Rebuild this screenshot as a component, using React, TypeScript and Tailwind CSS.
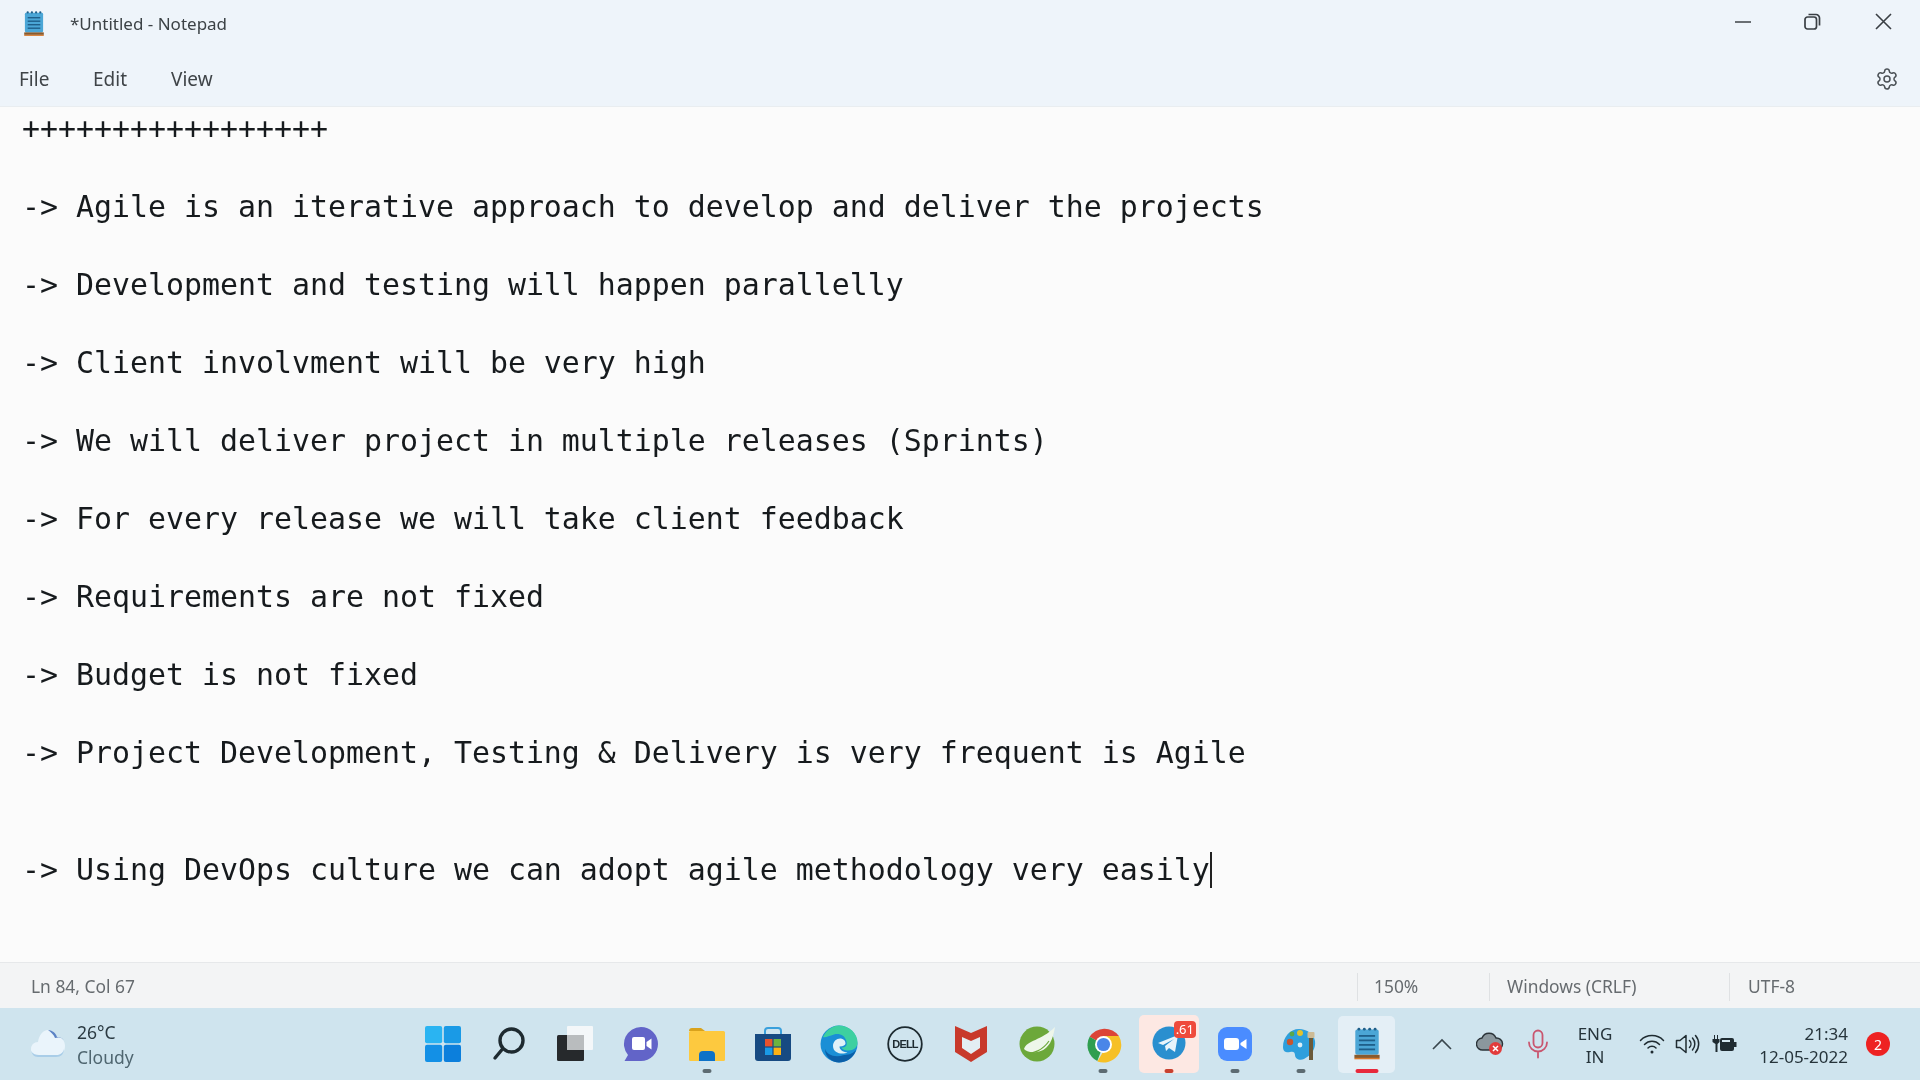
import { Settings } from "lucide-react";

const lines = [
  "+++++++++++++++++",
  "",
  "-> Agile is an iterative approach to develop and deliver the projects",
  "",
  "-> Development and testing will happen parallelly",
  "",
  "-> Client involvment will be very high",
  "",
  "-> We will deliver project in multiple releases (Sprints)",
  "",
  "-> For every release we will take client feedback",
  "",
  "-> Requirements are not fixed",
  "",
  "-> Budget is not fixed",
  "",
  "-> Project Development, Testing & Delivery is very frequent is Agile",
  "",
  "",
];

function NotepadIcon({ size }: { size: number }) {
  return (
    <svg width={size} height={size} viewBox="0 0 40 40">
      <rect x="7" y="4" width="26" height="28" rx="2" fill="#4ba6d6" />
      <g fill="#1f5f8a">
        <circle cx="11" cy="3.5" r="1.6" />
        <circle cx="17" cy="3.5" r="1.6" />
        <circle cx="23" cy="3.5" r="1.6" />
        <circle cx="29" cy="3.5" r="1.6" />
        <rect x="11" y="10" width="18" height="2" />
        <rect x="11" y="15" width="18" height="2" />
        <rect x="11" y="20" width="18" height="2" />
        <rect x="11" y="25" width="18" height="2" />
      </g>
      <rect x="6" y="32" width="28" height="3.5" fill="#8a5a2c" />
      <rect x="6" y="35.5" width="28" height="1.5" fill="#d9792b" />
    </svg>
  );
}

function StartIcon() {
  return (
    <svg width="36" height="36" viewBox="0 0 36 36">
      <rect x="0" y="0" width="17.2" height="17.2" rx="2" fill="#2ab4f2" />
      <rect x="18.8" y="0" width="17.2" height="17.2" rx="2" fill="#1a9ae6" />
      <rect x="0" y="18.8" width="17.2" height="17.2" rx="2" fill="#1390e6" />
      <rect x="18.8" y="18.8" width="17.2" height="17.2" rx="2" fill="#0c7fdc" />
    </svg>
  );
}

function SearchIcon() {
  return (
    <svg width="34" height="36" viewBox="0 0 34 36" fill="none" stroke="#1e2a30" strokeWidth="3.4" strokeLinecap="round">
      <circle cx="19.5" cy="14.5" r="11.5" />
      <path d="M10.5 23 L3 32" />
    </svg>
  );
}

function TaskViewIcon() {
  return (
    <svg width="36" height="36" viewBox="0 0 36 36">
      <rect x="10" y="0" width="26" height="24" rx="1" fill="#f4f7f9" />
      <rect x="0" y="9" width="27" height="26" rx="1.5" fill="#26292c" />
      <rect x="10" y="9" width="17" height="15" fill="#b9bcbe" />
    </svg>
  );
}

function ChatIcon() {
  return (
    <svg width="36" height="36" viewBox="0 0 36 36">
      <path d="M18 1a17 17 0 0 1 0 34H1.5l3.5-6A17 17 0 0 1 18 1z" fill="#6264c8" />
      <rect x="9" y="11" width="13" height="13" rx="2" fill="#fff" />
      <path d="M23.5 16l5-3.5v11l-5-3.5z" fill="#fff" />
    </svg>
  );
}

function ExplorerIcon() {
  return (
    <svg width="38" height="36" viewBox="0 0 38 36">
      <path d="M1 5a3 3 0 0 1 3-3h9l4 3h-16z" fill="#d9a21c" />
      <rect x="1" y="5" width="36" height="30" rx="1.5" fill="#fdc93f" />
      <path d="M11 35v-6a4 4 0 0 1 4-4h8a4 4 0 0 1 4 4v6z" fill="#0d72c8" />
    </svg>
  );
}

function StoreIcon() {
  return (
    <svg width="36" height="36" viewBox="0 0 36 36">
      <path d="M10 8V5a3 3 0 0 1 3-3h10a3 3 0 0 1 3 3v3" fill="none" stroke="#3aa0dc" strokeWidth="2" />
      <path d="M0 8h36v24a3 3 0 0 1-3 3H3a3 3 0 0 1-3-3z" fill="#174a82" />
      <rect x="10" y="13" width="7.4" height="7.4" fill="#e9522c" />
      <rect x="18.6" y="13" width="7.4" height="7.4" fill="#6cb33f" />
      <rect x="10" y="21.6" width="7.4" height="7.4" fill="#1a9ae6" />
      <rect x="18.6" y="21.6" width="7.4" height="7.4" fill="#fbb115" />
    </svg>
  );
}

function EdgeIcon() {
  return (
    <svg width="38" height="38" viewBox="0 0 38 38">
      <circle cx="19" cy="19" r="18.5" fill="#1a8fd6" />
      <path d="M3 12C7 3 15 .5 19 .5c11 0 18.5 8.5 18.5 17 0 5-4 8-9 8-4 0-7-1.500-7-3 4 0 6-2 5-6C25 10 19 8 14 9.500 9 11 5 13 3 12z" fill="#3dd0a0" />
      <path d="M24 30c3 0 8-.5 12-5-2 7-9 12.500-17 12.500C12 37.500 5 32 5 24c2 6 10 9 19 6z" fill="#0b5fa8" />
      <path d="M13 21c0-5 4-8 8-7.500 3 .5 4.500 2.500 4.500 5 0 1.500-2 3-6 3 0 3 3 5.500 8 6-5 2.500-14.500 1-14.500-6.500z" fill="#dff1f8" />
    </svg>
  );
}

function DellIcon() {
  return (
    <svg width="36" height="36" viewBox="0 0 36 36">
      <circle cx="18" cy="18" r="16.800" fill="none" stroke="#1d2a30" strokeWidth="1.800" />
      <text x="18" y="22" textAnchor="middle" fontFamily="Liberation Sans, sans-serif" fontWeight="700" fontSize="11" letterSpacing="-0.8" fill="#1d2a30">
        DELL
      </text>
    </svg>
  );
}

function McAfeeIcon() {
  return (
    <svg width="32" height="36" viewBox="0 0 32 36">
      <path d="M0 0l16 7 16-7v26L16 36 0 26z" fill="#c8392b" />
      <path d="M7 11l9 4 9-4v11l-9 6-9-6z" fill="#e3eef3" />
    </svg>
  );
}

function SpringIcon() {
  return (
    <svg width="37" height="36" viewBox="0 0 37 36">
      <circle cx="18" cy="18" r="17.500" fill="#6ca83a" />
      <path d="M36 1C34 12 31 24 18 26 11 27 7 25 5 23 8 14 22 15 36 1z" fill="#eef6ea" />
      <path d="M6 28c8 0 18-4 24-13" fill="none" stroke="#6ca83a" strokeWidth="1.200" />
    </svg>
  );
}

function ChromeIcon() {
  return (
    <svg width="37" height="37" viewBox="0 0 48 48">
      <path d="M24 24L6 14A23 23 0 0 1 44 13z" fill="#dc4437" />
      <path d="M24 24L6 14A23 23 0 0 0 16 45.500z" fill="#2f9e4f" />
      <path d="M24 13h20A23 23 0 0 1 16 46l12-20z" fill="#f6c026" />
      <circle cx="24" cy="24" r="11" fill="#fff" />
      <circle cx="24" cy="24" r="8.500" fill="#4a86e8" />
    </svg>
  );
}

function TelegramIcon() {
  return (
    <svg width="34" height="34" viewBox="0 0 34 34">
      <circle cx="17" cy="17" r="16.500" fill="#2a8fcf" />
      <path d="M6 17l20-8-3 17-6-4-3 3-1-5 9-7-11 6z" fill="#e8f4fb" />
    </svg>
  );
}

function ZoomIcon() {
  return (
    <svg width="34" height="34" viewBox="0 0 34 34">
      <rect width="34" height="34" rx="9" fill="#4a8cff" />
      <rect x="6" y="11" width="15" height="12" rx="3" fill="#fff" />
      <path d="M22.500 16l6-4v10l-6-4z" fill="#fff" />
    </svg>
  );
}

function PaintIcon() {
  return (
    <svg width="36" height="36" viewBox="0 0 36 36">
      <path d="M16 3C7 3 0 11 0 21c0 5 4 6 7 5 3-1 5 0 5 3 0 4 5 6 9 4 8-4 12-11 11-18C31 8 24 3 16 3z" fill="#2e9fdc" />
      <circle cx="7" cy="16" r="3.200" fill="#c8552f" />
      <circle cx="17" cy="7" r="3" fill="#e3c22d" />
      <circle cx="9" cy="8" r="2.400" fill="#59a84a" />
      <circle cx="17" cy="19" r="2.400" fill="#d9eef8" />
      <rect x="26" y="10" width="4" height="24" fill="#6b5a3a" />
      <rect x="24.500" y="6" width="7" height="6" rx="1" fill="#cdbb96" />
    </svg>
  );
}

function MicIcon() {
  return (
    <svg width="22" height="30" viewBox="0 0 22 30" fill="none" stroke="#c9566f" strokeWidth="1.800" strokeLinecap="round">
      <rect x="6.500" y="1.500" width="9" height="17" rx="4.500" />
      <path d="M2 13.500a9 9 0 0 0 18 0M11 22.500v6" />
    </svg>
  );
}

function CloudErrorIcon() {
  return (
    <svg width="28" height="26" viewBox="0 0 28 26">
      <path d="M7 19a6 6 0 0 1-1-12 7.500 7.500 0 0 1 14 0 6 6 0 0 1 1 12z" fill="#8b979d" stroke="#2b3338" strokeWidth="1.400" />
      <circle cx="19.500" cy="17.500" r="6.500" fill="#e23b3b" />
      <path d="M17 15l5 5M22 15l-5 5" stroke="#fff" strokeWidth="1.500" />
    </svg>
  );
}

function WifiIcon() {
  return (
    <svg width="26" height="22" viewBox="0 0 26 22" fill="none" stroke="#1f2b31" strokeWidth="1.500" strokeLinecap="round">
      <path d="M1.500 7.500a16 16 0 0 1 23 0M5.500 11.500a10.500 10.500 0 0 1 15 0M9 15a5.500 5.500 0 0 1 8 0" />
      <circle cx="13" cy="19" r="1.500" fill="#1f2b31" stroke="none" />
    </svg>
  );
}

function VolumeIcon() {
  return (
    <svg width="26" height="22" viewBox="0 0 26 22" fill="none" stroke="#1f2b31" strokeWidth="1.500" strokeLinecap="round" strokeLinejoin="round">
      <path d="M1.500 7.500h3.500l6-5v17l-6-5H1.500z" />
      <path d="M14.500 7.500a5 5 0 0 1 0 7M17.500 5a9 9 0 0 1 0 12M20.500 2.500a13 13 0 0 1 0 17" />
    </svg>
  );
}

function BatteryIcon() {
  return (
    <svg width="26" height="20" viewBox="0 0 26 20" fill="#1f2b31">
      <path d="M3 1v4h1V1zM6 1v4h1V1zM1.500 5h7v3l-2 2v8h-2v-8l-3-2z" />
      <rect x="9" y="4" width="14" height="13" rx="2" />
      <rect x="23" y="8" width="2.500" height="5" />
      <path d="M11 6h8v2h-8z" fill="#d3e6ef" />
    </svg>
  );
}

function WeatherIcon() {
  return (
    <svg width="36" height="30" viewBox="0 0 36 30">
      <path d="M18 1c4 0 8 3 9 7 5 0 8 4 8 9s-3 10-9 10H8c-5 0-7-3-7-7s3-7 7-7c1-7 5-12 10-12z" fill="#eaf4fb" />
      <path d="M18 1c4 0 8 3 9 7 3 0 5 1 7 3-3-3-6-3-9-2-1-3-4-6-7-8z" fill="#5b82c4" />
      <path d="M1 22c2 3 5 4 8 4h17c4 0 7-2 8-6 0 5-3 8-8 8H8c-4 0-6-3-7-6z" fill="#a9cde8" />
    </svg>
  );
}

function TaskbarItem({
  children,
  dot,
  className,
}: {
  children: React.ReactNode;
  dot?: string;
  className?: string;
}) {
  return (
    <div className={`relative w-[66px] h-[72px] flex items-center justify-center ${className ?? ""}`}>
      {children}
      {dot && <span className={`absolute bottom-[7px] left-1/2 -translate-x-1/2 h-[4px] rounded-full ${dot}`} />}
    </div>
  );
}

export default function App() {
  return (
    <div className="w-[1920px] h-[1080px] overflow-hidden flex flex-col bg-[#fbfbfb] blur-[0.4px] font-['Noto_Sans',sans-serif]">
      {/* Title bar */}
      <header className="h-[107px] bg-[#eef4fa] border-b border-[#e9edf0] flex flex-col shrink-0">
        <div className="h-[48px] flex items-center">
          <div className="w-[70px] pl-[20px] flex items-center">
            <NotepadIcon size={28} />
          </div>
          <span className="text-[17px] text-[#3c4246]">*Untitled - Notepad</span>
          <div className="ml-auto flex items-center text-[#3a3f44] pr-[1px] pb-[5px]">
            <div className="w-[69px] flex justify-center">
              <span className="w-[16px] h-[2px] bg-[#6a6f73]" />
            </div>
            <div className="w-[70px] flex justify-center">
              <svg width="17" height="17" viewBox="0 0 17 17" fill="none" stroke="#3a3f44" strokeWidth="1.700">
                <rect x="1" y="4" width="11.500" height="12" rx="2.500" />
                <path d="M4.500 1.500h7.500a3.500 3.500 0 0 1 3.500 3.500v7.500" />
              </svg>
            </div>
            <div className="w-[72px] flex justify-center">
              <svg width="17" height="17" viewBox="0 0 17 17" fill="none" stroke="#3a3f44" strokeWidth="1.600">
                <path d="M1 1l15 15M16 1L1 16" />
              </svg>
            </div>
          </div>
        </div>
        <nav className="flex-1 flex items-center pl-[19px] pr-[21px] pt-[4px] text-[#3f4448] text-[19px]">
          <span className="w-[74px]">File</span>
          <span className="w-[78px]">Edit</span>
          <span>View</span>
          <Settings className="ml-auto w-[24px] h-[24px] text-[#4a5055]" strokeWidth={1.5} />
        </nav>
      </header>

      {/* Editor */}
      <main className="flex-1 min-h-0 pl-[22px] pt-[2px] font-['DejaVu_Sans_Mono',monospace] text-[29.9px] leading-[39px] text-[#161a1d] whitespace-pre">
        {lines.map((line, i) => (
          <div key={i} className="h-[39px]">
            {line}
          </div>
        ))}
        <div className="h-[39px] flex items-center">
          -&gt; Using DevOps culture we can adopt agile methodology very easily
          <span className="w-[2px] h-[36px] bg-[#222]" />
        </div>
      </main>

      {/* Status bar */}
      <footer className="h-[46px] shrink-0 bg-[#f3f4f5] border-t border-[#e6e8ea] flex items-center pt-[2px] text-[17.4px] text-[#666b6f]">
        <span className="pl-[31px] w-[1357px]">Ln 84, Col 67</span>
        <span className="w-[132px] h-[28px] pl-[16px] border-l border-[#dfe1e3] flex items-center">150%</span>
        <span className="w-[240px] h-[28px] pl-[17px] border-l border-[#dfe1e3] flex items-center">Windows (CRLF)</span>
        <span className="h-[28px] pl-[18px] border-l border-[#dfe1e3] flex items-center">UTF-8</span>
      </footer>

      {/* Taskbar */}
      <div className="h-[72px] shrink-0 bg-[#cfe4ee] flex items-center">
        <div className="w-[410px] flex items-center pl-[30px] gap-[11px]">
          <WeatherIcon />
          <div className="flex flex-col leading-[25px] pt-[2px] text-[17.5px]">
            <span className="text-[#2b3a42]">26°C</span>
            <span className="text-[#4f6670]">Cloudy</span>
          </div>
        </div>

        <div className="flex items-center">
          <TaskbarItem><StartIcon /></TaskbarItem>
          <TaskbarItem><SearchIcon /></TaskbarItem>
          <TaskbarItem><TaskViewIcon /></TaskbarItem>
          <TaskbarItem><ChatIcon /></TaskbarItem>
          <TaskbarItem dot="w-[9px] bg-[#5d6b72]"><ExplorerIcon /></TaskbarItem>
          <TaskbarItem><StoreIcon /></TaskbarItem>
          <TaskbarItem><EdgeIcon /></TaskbarItem>
          <TaskbarItem><DellIcon /></TaskbarItem>
          <TaskbarItem><McAfeeIcon /></TaskbarItem>
          <TaskbarItem><SpringIcon /></TaskbarItem>
          <TaskbarItem dot="w-[9px] bg-[#5d6b72]"><ChromeIcon /></TaskbarItem>
          <TaskbarItem dot="w-[9px] bg-[#c8402f]">
            <div className="absolute left-[3px] top-[7px] w-[60px] h-[58px] rounded-[5px] bg-[#fde8e3]" />
            <div className="relative mt-[-2px]">
              <TelegramIcon />
              <span className="absolute -top-[5px] -right-[10px] h-[17px] px-[2px] rounded-[4px] bg-[#ef4a3c] text-white text-[13px] leading-[17px]">.61</span>
            </div>
          </TaskbarItem>
          <TaskbarItem dot="w-[9px] bg-[#5d6b72]"><ZoomIcon /></TaskbarItem>
          <TaskbarItem dot="w-[9px] bg-[#5d6b72]"><PaintIcon /></TaskbarItem>
          <TaskbarItem dot="w-[23px] bg-[#e8293c]">
            <div className="absolute left-[4px] top-[8px] w-[57px] h-[57px] rounded-[5px] bg-[#e4eff6]" />
            <div className="relative">
              <NotepadIcon size={36} />
            </div>
          </TaskbarItem>
        </div>

        {/* Tray */}
        <div className="flex-1 flex items-center pl-[18px] text-[#26343b]">
          <div className="w-[48px] flex justify-center">
            <svg width="20" height="12" viewBox="0 0 20 12" fill="none" stroke="#39464d" strokeWidth="1.600">
              <path d="M1 11l9-9 9 9" />
            </svg>
          </div>
          <div className="w-[48px] flex justify-center"><CloudErrorIcon /></div>
          <div className="w-[48px] flex justify-center"><MicIcon /></div>
          <div className="w-[66px] flex flex-col items-center pt-[2px] text-[17px] leading-[23px]">
            <span>ENG</span>
            <span>IN</span>
          </div>
          <div className="ml-[6px] w-[36px] flex justify-center"><WifiIcon /></div>
          <div className="w-[36px] flex justify-center"><VolumeIcon /></div>
          <div className="w-[36px] flex justify-center"><BatteryIcon /></div>
          <div className="w-[106px] flex flex-col items-end pt-[2px] text-[17px] leading-[23px]">
            <span>21:34</span>
            <span>12-05-2022</span>
          </div>
          <div className="ml-[18px] w-[24px] h-[24px] rounded-full bg-[#ee2222] text-white text-[14px] flex items-center justify-center">2</div>
        </div>
      </div>
    </div>
  );
}
